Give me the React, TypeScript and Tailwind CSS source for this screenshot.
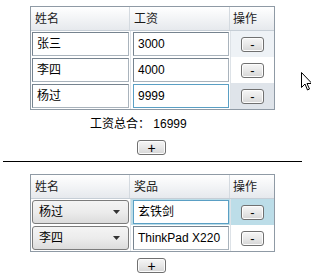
import React from 'react';

const FONT = { fontFamily: '"Liberation Sans", "Noto Sans CJK SC", sans-serif' };

const salaries = [
  { name: '张三', pay: '3000', bg: 'bg-[#eef2f6]' },
  { name: '李四', pay: '4000', bg: 'bg-white' },
  { name: '杨过', pay: '9999', bg: 'bg-[#dfe4ea]', focus: true },
];

const prizes = [
  { name: '杨过', prize: '玄铁剑', bg: 'bg-[#bcdde8]', focus: true },
  { name: '李四', prize: 'ThinkPad X220', bg: 'bg-white' },
];

function SmallButton({ label, wide }: { label: string; wide?: boolean }) {
  return (
    <div
      className={`${wide ? 'w-[29px] text-[14px]' : 'w-[23px] text-[13px]'} h-[15px] rounded-[3px] border border-[#707070] bg-gradient-to-b from-[#f6f6f6] via-[#e8e8e8] to-[#d6d6d6] flex items-center justify-center leading-none text-black shadow-[inset_0_0_0_1px_#fcfcfc]`}
    >
      {label}
    </div>
  );
}

function TextBox({ value, focus }: { value: string; focus?: boolean }) {
  return (
    <div
      className={`h-[24px] border ${focus ? 'border-[#5a9fc4]' : 'border-[#76838f] border-b-[#a9b3bc] border-r-[#a9b3bc]'} bg-white flex items-center px-[4px] text-[12px] text-black whitespace-nowrap overflow-hidden`}
    >
      {value}
    </div>
  );
}

function Combo({ value }: { value: string }) {
  return (
    <div className="h-[24px] rounded-[3px] border border-[#7b7b7b] bg-gradient-to-b from-[#f4f4f4] via-[#ececec] to-[#dcdcdc] flex items-center pl-[6px] pr-[8px] text-[12px] text-black">
      <span className="flex-1">{value}</span>
      <svg width="7" height="4" viewBox="0 0 7 4">
        <path d="M0 0h7L3.5 4z" fill="#333" />
      </svg>
    </div>
  );
}

function Header({ second }: { second: string }) {
  return (
    <div className="flex h-[24px] border-b border-[#c6ced6] bg-gradient-to-b from-white to-[#e6e9ed] text-[12px] text-[#1b1b1b]">
      <div className="w-[99px] pl-[4px] flex items-center border-r border-[#d4dae0]">姓名</div>
      <div className="w-[100px] pl-[4px] flex items-center border-r border-[#d4dae0]">{second}</div>
      <div className="w-[44px] pl-[3px] flex items-center">操作</div>
    </div>
  );
}

export default function App() {
  return (
    <div className="relative w-[311px] h-[279px] bg-white pt-[6px] overflow-hidden" style={FONT}>
      <div className="ml-[30px] w-[245px] border border-[#8f9aa5]">
        <Header second="工资" />
        {salaries.map((r) => (
          <div key={r.name} className="flex h-[26px]">
            <div className="w-[99px] p-[1px]">
              <TextBox value={r.name} />
            </div>
            <div className="w-[100px] py-[1px] pl-[2px] pr-[1px] border-l border-[#dde2e7]">
              <TextBox value={r.pay} focus={r.focus} />
            </div>
            <div className={`w-[44px] flex items-center justify-center border-l border-[#dde2e7] ${r.bg}`}>
              <SmallButton label="-" />
            </div>
          </div>
        ))}
      </div>

      <div className="ml-[90px] mt-[6px] h-[16px] flex items-center text-[12px] text-black">
        工资总合：&nbsp;16999
      </div>

      <div className="ml-[137px] mt-[8px]">
        <SmallButton label="+" wide />
      </div>

      <div className="ml-[3px] mt-[6px] w-[299px] h-[1px] bg-black" />

      <div className="ml-[30px] mt-[12px] w-[245px] border border-[#8f9aa5]">
        <Header second="奖品" />
        {prizes.map((r) => (
          <div key={r.name} className="flex h-[26px]">
            <div className="w-[99px] p-[1px]">
              <Combo value={r.name} />
            </div>
            <div className={`w-[100px] py-[1px] pl-[2px] pr-[1px] border-l border-[#dde2e7] ${r.bg}`}>
              <TextBox value={r.prize} focus={r.focus} />
            </div>
            <div className={`w-[44px] flex items-center justify-center border-l border-[#dde2e7] ${r.bg}`}>
              <SmallButton label="-" />
            </div>
          </div>
        ))}
      </div>

      <div className="ml-[137px] mt-[6px]">
        <SmallButton label="+" wide />
      </div>

      <svg className="absolute left-[301px] top-[72px]" width="12" height="19" viewBox="0 0 12 19">
        <path d="M0.5 0.5v15l3.5-3.5 2.5 6 2-1-2.5-5.5h5z" fill="white" stroke="black" strokeWidth="1" strokeLinejoin="miter" />
      </svg>
    </div>
  );
}
